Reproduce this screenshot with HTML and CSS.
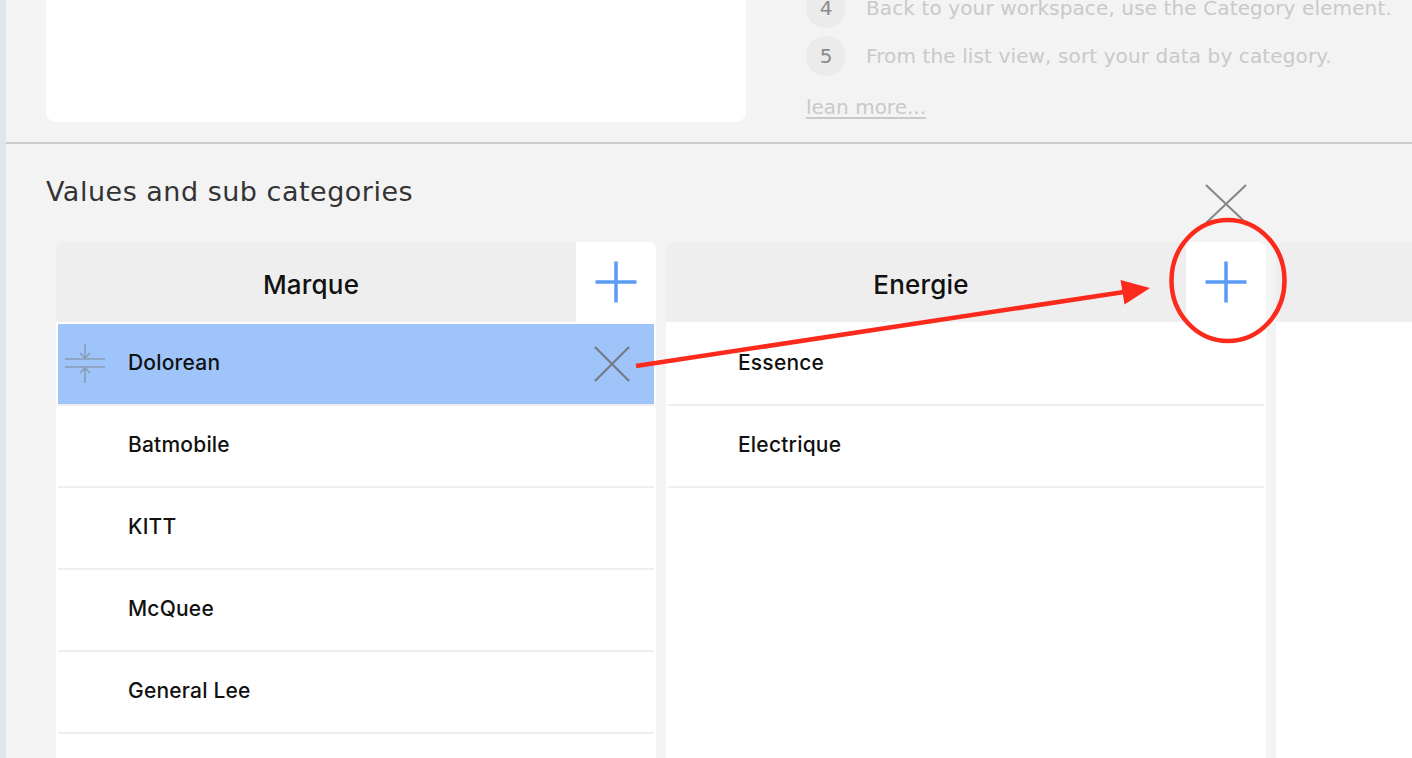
FILE: index.html
```html
<!DOCTYPE html>
<html lang="en">
<head>
<meta charset="utf-8">
<title>Values and sub categories</title>
<link rel="stylesheet" href="styles.css">
</head>
<body>
<div class="app">
  <aside class="edge"></aside>
  <main class="main">
    <section class="top">
      <div class="card"></div>
      <div class="help">
        <ol class="steps">
          <li class="step"><span class="num">4</span><span class="step-text">Back to your workspace, use the Category element.</span></li>
          <li class="step"><span class="num">5</span><span class="step-text">From the list view, sort your data by category.</span></li>
        </ol>
        <a class="more" href="#">lean more...</a>
      </div>
    </section>

    <section class="values">
      <h2 class="title">Values and sub categories</h2>
      <div class="columns">
        <div class="column">
          <div class="col-header">
            <div class="col-title">Marque</div>
            <button class="col-add" type="button" aria-label="Add">
              <svg width="44" height="44" viewBox="0 0 44 44"><path d="M22 1.5V42.5M1.5 22H42.5" stroke="#5b9bf6" stroke-width="3.5" fill="none"/></svg>
            </button>
          </div>
          <ul class="col-list">
            <li class="row selected">
              <span class="handle">
                <svg width="42" height="42" viewBox="0 0 42 42"><g stroke="#7a7a7a" stroke-width="1.6" fill="none"><path d="M1 16H41M1 24H41"/><path d="M21 1V15M16 10L21 15L26 10"/><path d="M21 25V40M16 30L21 25L26 30"/></g></svg>
              </span>
              <span class="label">Dolorean</span>
              <span class="remove">
                <svg width="36" height="36" viewBox="0 0 36 36"><path d="M1 1L35 35M35 1L1 35" stroke="#6c6c6c" stroke-width="2" fill="none"/></svg>
              </span>
            </li>
            <li class="row"><span class="handle"></span><span class="label">Batmobile</span></li>
            <li class="row"><span class="handle"></span><span class="label">KITT</span></li>
            <li class="row"><span class="handle"></span><span class="label">McQuee</span></li>
            <li class="row"><span class="handle"></span><span class="label">General Lee</span></li>
            <li class="row"><span class="handle"></span><span class="label"></span></li>
          </ul>
        </div>

        <div class="column">
          <span class="col-close">
            <svg width="42" height="40" viewBox="0 0 42 40"><path d="M1 1L41 39M41 1L1 39" stroke="#858585" stroke-width="2" fill="none"/></svg>
          </span>
          <div class="col-header">
            <div class="col-title">Energie</div>
            <button class="col-add" type="button" aria-label="Add">
              <svg width="44" height="44" viewBox="0 0 44 44"><path d="M22 1.5V42.5M1.5 22H42.5" stroke="#5b9bf6" stroke-width="3.5" fill="none"/></svg>
            </button>
          </div>
          <ul class="col-list">
            <li class="row"><span class="handle"></span><span class="label">Essence</span></li>
            <li class="row"><span class="handle"></span><span class="label">Electrique</span></li>
          </ul>
        </div>

        <div class="column">
          <div class="col-header">
            <div class="col-title"></div>
          </div>
          <ul class="col-list"></ul>
        </div>
      </div>
    </section>
  </main>

  <svg class="annotation" width="1412" height="758" viewBox="0 0 1412 758" aria-hidden="true">
    <line x1="636" y1="366" x2="1124" y2="292" stroke="#fb2a1c" stroke-width="4.5"/>
    <polygon points="1150,288 1120.5,280 1124.5,304.5" fill="#fb2a1c"/>
    <ellipse cx="1228" cy="280.5" rx="56.5" ry="60.5" fill="none" stroke="#fb2a1c" stroke-width="4.5"/>
  </svg>
</div>
</body>
</html>
```

FILE: styles.css
```css
* {
  box-sizing: border-box;
}

html,
body {
  margin: 0;
  height: 100%;
  overflow: hidden;
  background: #f3f3f3;
}

.app {
  position: relative;
  display: flex;
  height: 758px;
}

.edge {
  flex: none;
  width: 6px;
  background: #e1e6ea;
}

.main {
  flex: 1;
  min-width: 0;
  display: flex;
  flex-direction: column;
}

/* ---------- top area ---------- */
.top {
  flex: none;
  height: 144px;
  display: flex;
  align-items: flex-start;
  padding-left: 40px;
  border-bottom: 2px solid #cccccc;
  overflow: hidden;
}

.card {
  flex: none;
  width: 700px;
  height: 122px;
  background: #ffffff;
  border-radius: 0 0 10px 10px;
}

.help {
  margin-left: 60px;
  margin-top: -12px;
  font-family: "DejaVu Sans", Verdana, sans-serif;
  font-size: 20px;
  color: #c9c9c9;
}

.steps {
  list-style: none;
  margin: 0;
  padding: 0;
}

.step {
  display: flex;
  align-items: center;
  gap: 20px;
  height: 40px;
  margin-bottom: 8px;
}

.num {
  flex: none;
  width: 40px;
  height: 40px;
  border-radius: 50%;
  background: #ebebeb;
  color: #8a8a8a;
  display: flex;
  align-items: center;
  justify-content: center;
}

.step-text {
  white-space: nowrap;
  letter-spacing: 0.12px;
}

.more {
  display: inline-block;
  margin-top: 10px;
  line-height: 26px;
  color: #c9c9c9;
  text-decoration: underline;
  text-underline-offset: 3px;
}

/* ---------- values area ---------- */
.values {
  flex: 1;
  min-height: 0;
  display: flex;
  flex-direction: column;
  padding-left: 40px;
  overflow: hidden;
}

.title {
  margin: 32px 0 0;
  font-family: "DejaVu Sans", Verdana, sans-serif;
  font-size: 27px;
  letter-spacing: 0.5px;
  line-height: 32px;
  font-weight: normal;
  color: #333333;
}

.columns {
  flex: 1;
  display: flex;
  gap: 10px;
  margin: 34px 0 0 10px;
  align-items: stretch;
}

.column {
  position: relative;
  flex: none;
  width: 600px;
  background: #ffffff;
  border-radius: 8px 8px 0 0;
  display: flex;
  flex-direction: column;
  font-family: Inter, "Liberation Sans", sans-serif;
  color: #111111;
}

.col-header {
  flex: none;
  display: flex;
  height: 80px;
}

.col-title {
  flex: 1;
  display: flex;
  align-items: center;
  justify-content: center;
  padding: 4px 10px 0 0;
  background: #eeeeee;
  border-radius: 8px 0 0 0;
  font-size: 26px;
  font-weight: 500;
  letter-spacing: 0.2px;
}

.col-add {
  flex: none;
  width: 80px;
  height: 80px;
  padding: 0;
  border: 0;
  background: #ffffff;
  border-radius: 0 8px 0 0;
  display: flex;
  align-items: center;
  justify-content: center;
}

.col-close {
  position: absolute;
  top: -58px;
  right: 19px;
  display: flex;
}

.col-list {
  list-style: none;
  margin: 0;
  padding: 2px 2px 0;
}

.row {
  display: flex;
  align-items: center;
  height: 82px;
  padding: 0 24px 0 6px;
  border-bottom: 2px solid #eeeeee;
  font-size: 21px;
  font-weight: 500;
  letter-spacing: 0.2px;
}

.row.selected {
  background: #9ec4fa;
  background-clip: padding-box;
}

.handle {
  flex: none;
  width: 42px;
  height: 42px;
  margin-right: 22px;
  display: flex;
  opacity: 0.55;
}

.label {
  flex: 1;
  padding-bottom: 4px;
}

.remove {
  flex: none;
  display: flex;
  opacity: 0.85;
}

.annotation {
  position: absolute;
  top: 0;
  left: 0;
  pointer-events: none;
}
```
